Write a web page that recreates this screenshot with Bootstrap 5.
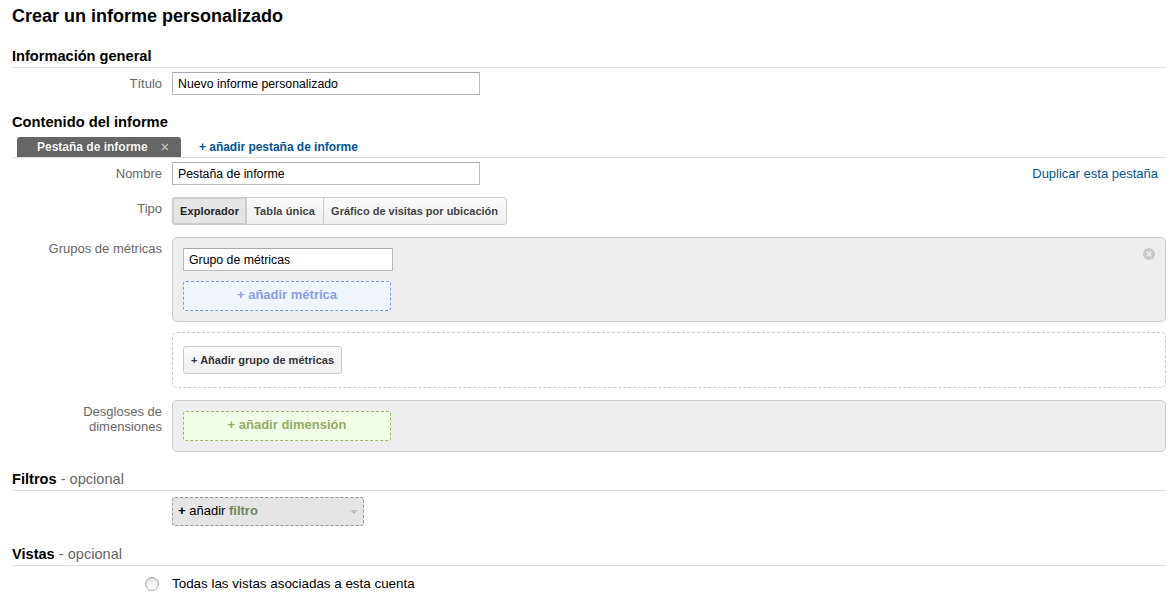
<!DOCTYPE html>
<html lang="es">
<head>
<meta charset="utf-8">
<title>Crear un informe personalizado</title>
<link href="https://cdn.jsdelivr.net/npm/bootstrap@5.3.0/dist/css/bootstrap.min.css" rel="stylesheet">
<style>
html,body{height:597px;overflow:hidden}
body{font-family:"Liberation Sans",Arial,sans-serif;font-size:12px;line-height:16px;color:#000;background:#fff}
.pg{padding:6px 3px 0 12px}
.pg-title{font-size:18px;line-height:20px;font-weight:700;margin:0 0 20px}
.sec-head{font-size:14.6px;line-height:18px;font-weight:700;margin:0;border-bottom:1px solid #e0e0e0;padding-top:1px;height:22px}
.sec-head span{font-weight:400;color:#666}
.sec-plain{font-size:14.7px;line-height:18px;font-weight:700;margin:18px 0 6px}
.frm-row{display:flex}
.frm-label{flex:0 0 150px;text-align:right;color:#666;font-size:13px;line-height:15px;margin-right:10px}
.frm-body{flex:1 1 auto;min-width:0}
.txt-in{display:block;height:23px;width:308px;padding:0 5px;border:1px solid #bbb;border-top-color:#a8a8a8;font-size:12.3px;color:#000;background:#fff;border-radius:0;outline:0;font-family:inherit}
.tab-bar{display:flex;align-items:flex-end;height:21px;border-bottom:1px solid #e0e0e0;padding-left:5px}
.tab-on{width:164px;height:20px;background:#666;color:#fff;font-weight:700;border-radius:3px 3px 0 0;display:flex;align-items:center;justify-content:space-between;padding:0 12px 0 20px;text-shadow:0 0 1px #333}
.tab-on i{font-style:normal;color:#bbb;font-size:14px;font-weight:700}
.tab-add{font-weight:700;color:#05558f;margin-left:18px;line-height:20px;text-decoration:none;letter-spacing:-.03px}
.dup{font-size:13px;color:#05558f;text-decoration:none;margin-right:8px;line-height:16px}
.seg .btn{font-family:inherit;font-size:11px;font-weight:700;line-height:14px;color:#444;height:28px;padding:0 8px 0 7px;border:1px solid #ccc;background:linear-gradient(#fafafa,#f0f0f0);--bs-btn-border-radius:3px}
.seg .btn.sel{background:#e5e5e5;color:#222;border:2px solid #ccc;padding:0 6px;letter-spacing:.1px}
.seg .btn.mid{letter-spacing:.12px}
.panel-g{background:#eee;border:1px solid #ccc;border-radius:5px;padding:10px;position:relative}
.panel-d{border:1px dashed #ccc;border-radius:5px;padding:13px 10px}
.add-m,.add-d{width:208px;height:30px;border-radius:3px;display:flex;align-items:center;justify-content:center;font-size:13px;font-weight:700;padding-bottom:2px}
.add-m{border:1px dashed #7d97e8;background:#f1f5fe;color:#8aa0e8}
.add-d{border:1px dashed #9cb86c;background:#f2fde7;color:#93ad6a}
.group-btn{font-family:inherit;font-size:11px;font-weight:700;color:#333;height:28px;padding:0 7px;border:1px solid #ccc;border-radius:3px;background:linear-gradient(#fafafa,#f0f0f0);--bs-btn-color:#333;letter-spacing:.03px}
.close-dot{position:absolute;top:10px;right:10px;width:12px;height:12px}
.filter-drop{width:192px;height:29px;border:1px dashed #999;border-radius:3px;background:#e5e5e5;display:flex;align-items:center;justify-content:space-between;padding:0 5px 2px;font-size:13px}
.filter-drop b.g{color:#6d8a5e}
.filter-caret{width:0;height:0;border-left:4px solid transparent;border-right:4px solid transparent;border-top:4px solid #bbb;margin-top:2px}
.radio-dot{width:14px;height:14px;border-radius:50%;border:1px solid #aaa;background:linear-gradient(#e8e8e8,#fff);margin-left:133px;margin-right:13px;flex:none;box-shadow:inset 0 1px 1px rgba(0,0,0,.1)}
.radio-row{margin-top:10px;font-size:13.4px}
</style>
</head>
<body>
<div class="pg">
  <h1 class="pg-title">Crear un informe personalizado</h1>
  <h2 class="sec-head">Información general</h2>
  <div class="frm-row mt-1">
    <label class="frm-label" style="line-height:23px">Título</label>
    <div class="frm-body"><input class="txt-in" value="Nuevo informe personalizado"></div>
  </div>
  <h2 class="sec-plain">Contenido del informe</h2>
  <div class="tab-bar">
    <div class="tab-on"><span>Pestaña de informe</span><i>×</i></div>
    <a class="tab-add" href="#">+ añadir pestaña de informe</a>
  </div>
  <div class="frm-row mt-1 justify-content-between">
    <label class="frm-label" style="line-height:23px">Nombre</label>
    <div class="frm-body d-flex justify-content-between align-items-center"><input class="txt-in" value="Pestaña de informe"><a class="dup" href="#">Duplicar esta pestaña</a></div>
  </div>
  <div class="frm-row" style="margin-top:12px">
    <label class="frm-label" style="line-height:24px">Tipo</label>
    <div class="frm-body">
      <div class="btn-group seg" role="group">
        <button class="btn sel" type="button">Explorador</button>
        <button class="btn mid" type="button">Tabla única</button>
        <button class="btn" type="button">Gráfico de visitas por ubicación</button>
      </div>
    </div>
  </div>
  <div class="frm-row" style="margin-top:12px">
    <label class="frm-label" style="padding-top:4px">Grupos de métricas</label>
    <div class="frm-body">
      <div class="panel-g">
        <input class="txt-in" style="width:210px" value="Grupo de métricas">
        <div class="add-m" style="margin-top:10px">+ añadir métrica</div>
        <svg class="close-dot" viewBox="0 0 12 12"><circle cx="6" cy="6" r="6" fill="#c8c8c8"/><path d="M3.8 3.8l4.4 4.4M8.2 3.8l-4.4 4.4" stroke="#eee" stroke-width="1.6"/></svg>
      </div>
      <div class="panel-d" style="margin-top:10px"><button class="btn group-btn" type="button">+ Añadir grupo de métricas</button></div>
    </div>
  </div>
  <div class="frm-row" style="margin-top:12px">
    <label class="frm-label" style="padding-top:4px">Desgloses de<br>dimensiones</label>
    <div class="frm-body">
      <div class="panel-g"><div class="add-d">+ añadir dimensión</div></div>
    </div>
  </div>
  <h2 class="sec-head" style="margin-top:17px">Filtros <span>- opcional</span></h2>
  <div class="frm-row" style="margin-top:6px">
    <div class="frm-label"></div>
    <div class="frm-body"><div class="filter-drop"><span><b>+</b> añadir <b class="g">filtro</b></span><span class="filter-caret"></span></div></div>
  </div>
  <h2 class="sec-head" style="margin-top:18px">Vistas <span>- opcional</span></h2>
  <div class="d-flex align-items-center radio-row">
    <span class="radio-dot"></span><span>Todas las vistas asociadas a esta cuenta</span>
  </div>
</div>
<script src="https://cdn.jsdelivr.net/npm/bootstrap@5.3.0/dist/js/bootstrap.bundle.min.js"></script>
</body>
</html>
